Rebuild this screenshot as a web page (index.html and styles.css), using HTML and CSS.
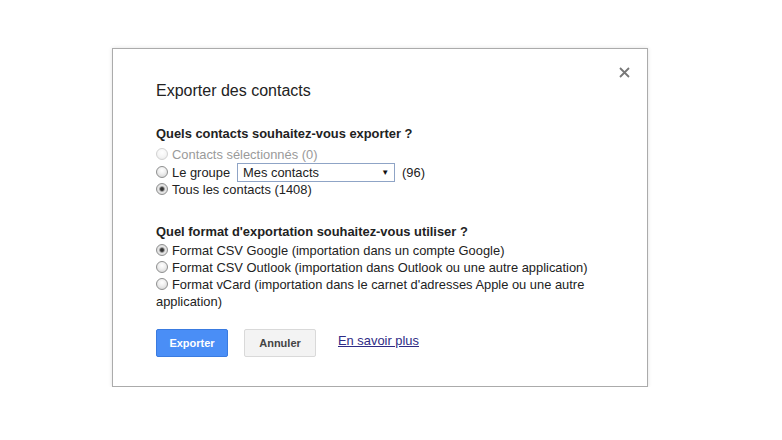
FILE: index.html
```html
<!doctype html>
<html lang="fr">

<head>
    <meta charset="UTF-8">
    <title>Exporter des contacts</title>
    <link rel="stylesheet" href="styles.css">
</head>

<body>
    <div class="page">
        <div class="dialog">
            <span class="close">
                <svg width="11" height="11" viewBox="0 0 11 11">
                    <path d="M1 1L10 10M10 1L1 10" stroke="#777" stroke-width="1.8" fill="none" />
                </svg>
            </span>

            <h1 class="title">Exporter des contacts</h1>

            <h2 class="question q1">Quels contacts souhaitez-vous exporter ?</h2>
            <div class="opts opts1">
                <div class="opt disabled"><span class="radio"></span>Contacts sélectionnés (0)</div>
                <div class="opt"><span class="radio"></span>Le groupe<span class="select"><span>Mes contacts</span><span class="arrow">▼</span></span>(96)</div>
                <div class="opt"><span class="radio on"></span>Tous les contacts (1408)</div>
            </div>

            <h2 class="question q2">Quel format d'exportation souhaitez-vous utiliser ?</h2>
            <div class="opts opts2">
                <div class="opt"><span class="radio on"></span>Format CSV Google (importation dans un compte Google)</div>
                <div class="opt"><span class="radio"></span>Format CSV Outlook (importation dans Outlook ou une autre application)</div>
                <div class="opt"><span class="radio"></span>Format vCard (importation dans le carnet d'adresses Apple ou une autre application)</div>
            </div>

            <div class="actions">
                <span class="btn btn-blue">Exporter</span>
                <span class="btn btn-grey">Annuler</span>
                <a class="more" href="#">En savoir plus</a>
            </div>
        </div>
    </div>
</body>

</html>
```

FILE: styles.css
```css
* {
    margin: 0;
    padding: 0;
}

body {
    background: #fff;
    font-family: "Liberation Sans", Arial, sans-serif;
    color: #222;
}

.page {
    padding: 48px 0 0 112px;
}

.dialog {
    position: relative;
    box-sizing: border-box;
    width: 536px;
    height: 339px;
    padding: 32px 42px 0 43px;
    border: 1px solid #ababab;
    box-shadow: 0 0 4px rgba(0, 0, 0, 0.12);
    background: #fff;
}

.close {
    position: absolute;
    top: 18px;
    right: 17px;
    width: 11px;
    height: 11px;
}

.close svg {
    display: block;
}

.title {
    font-size: 16px;
    font-weight: normal;
    line-height: 20px;
    color: #222;
}

.question {
    font-size: 12.9px;
    font-weight: bold;
    line-height: 17px;
}

.q1 {
    margin-top: 24px;
}

.q2 {
    margin-top: 24px;
}

.opts {
    font-size: 12.9px;
}

.opts1 {
    margin-top: 4px;
}

.opts1 .opt {
    height: 17.5px;
    line-height: 17.5px;
    white-space: nowrap;
}

.opts2 {
    margin-top: 2px;
}

.opts2 .opt {
    line-height: 17px;
}

.opt.disabled {
    color: #9a9a9a;
}

.radio {
    display: inline-block;
    box-sizing: border-box;
    width: 12px;
    height: 12px;
    margin-right: 4px;
    border: 1px solid #8e8f8f;
    border-radius: 50%;
    background: radial-gradient(circle at 50% 35%, #fff 0, #f0f0f0 40%, #cfcfcf 100%);
    vertical-align: -1px;
}

.radio.on {
    background: radial-gradient(circle at 50% 50%, #2d2d2d 0, #3a3a3a 20%, #8a8a8a 32%, #e6e6e6 46%, #d6d6d6 100%);
}

.disabled .radio {
    border-color: #d2d2d2;
    background: radial-gradient(circle at 50% 35%, #fff 0, #f6f6f6 50%, #e6e6e6 100%);
}

.select {
    display: inline-flex;
    align-items: center;
    box-sizing: border-box;
    width: 158px;
    height: 19px;
    margin: 0 7px 0 7px;
    padding: 0 5px 0 5px;
    border: 1px solid #8fa4c6;
    background: #fff;
    vertical-align: middle;
    position: relative;
    top: -1px;
    line-height: 17px;
}

.select .arrow {
    margin-left: auto;
    font-size: 8px;
    color: #111;
}

.actions {
    display: flex;
    align-items: center;
    margin-top: 19px;
}

.btn {
    box-sizing: border-box;
    width: 72px;
    height: 28px;
    line-height: 26px;
    border-radius: 2px;
    font-size: 11px;
    font-weight: bold;
    text-align: center;
    cursor: pointer;
}

.btn-blue {
    background: #4a8ef6;
    border: 1px solid #3a7be0;
    color: #fff;
}

.btn-grey {
    margin-left: 16px;
    background: #f3f3f3;
    border: 1px solid #d9d9d9;
    color: #444;
}

.more {
    margin: 0 0 5px 22px;
    font-size: 12.9px;
    line-height: 17px;
    color: #2e2b85;
    text-decoration: underline;
}
```
